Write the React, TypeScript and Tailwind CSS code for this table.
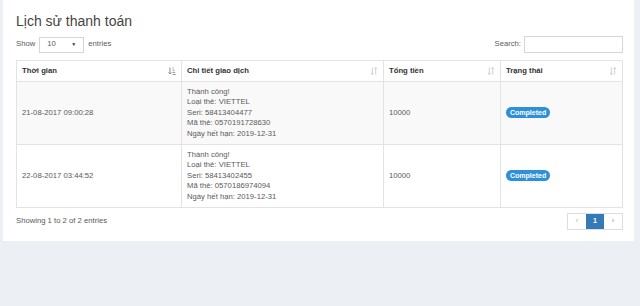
import { FC } from "react"

interface Payment {
  time: string
  seri: string
  code: string
  amount: string
}

const payments: Payment[] = [
  { time: "21-08-2017 09:00:28", seri: "58413404477", code: "0570191728630", amount: "10000" },
  { time: "22-08-2017 03:44:52", seri: "58413402455", code: "0570186974094", amount: "10000" },
]

const SortIcon: FC<{ active?: boolean }> = ({ active }) =>
  active ? (
    <svg width="8" height="8" viewBox="0 0 8 8" className="shrink-0">
      <path d="M2 0.5v6.5M0.5 5.5L2 7l1.5-1.5" stroke="#8a8a8a" strokeWidth="1" fill="none" />
      <path d="M4.5 1h1.2M4.5 3.2h2M4.5 5.4h2.8M4.5 7.5h3.3" stroke="#8a8a8a" strokeWidth="0.9" />
    </svg>
  ) : (
    <svg width="8" height="8" viewBox="0 0 8 8" className="shrink-0">
      <path d="M2.3 0.5v7M1 6l1.3 1.5L3.6 6" stroke="#d0d0d0" strokeWidth="1" fill="none" />
      <path d="M5.7 7.5v-7M4.4 2l1.3-1.5L7 2" stroke="#d0d0d0" strokeWidth="1" fill="none" />
    </svg>
  )

const HeadCell: FC<{ label: string; active?: boolean; last?: boolean }> = ({ label, active, last }) => (
  <th className={`h-[21px] px-[5px] text-left font-bold text-[#333] ${last ? "" : "border-r border-[#e3e3e3]"}`}>
    <div className="flex items-center justify-between">
      <span>{label}</span>
      <SortIcon active={active} />
    </div>
  </th>
)

export default function App() {
  return (
    <div
      className="min-h-[306px] bg-[#ecf0f5] pl-[3px] pr-[6px] text-[7.7px] leading-[10.5px] text-[#5a5a5a]"
      style={{ fontFamily: '"Liberation Sans", Arial, sans-serif' }}
    >
      <div className="h-[241px] bg-white pl-[13px] pr-[11px] pt-[13px]">
        <h3 className="text-[14px] leading-[16px] font-light text-[#444]">Lịch sử thanh toán</h3>

        <div className="mt-[7px] flex items-center justify-between">
          <div className="flex items-center gap-[4px]">
            <span>Show</span>
            <div className="flex h-[16px] w-[45px] items-center justify-between border border-[#d2d6de] px-[7px]">
              <span>10</span>
              <span className="text-[5px] text-[#333]">▼</span>
            </div>
            <span>entries</span>
          </div>
          <div className="flex items-center gap-[3px]">
            <span>Search:</span>
            <div className="h-[17px] w-[99px] border border-[#d2d6de]" />
          </div>
        </div>

        <table className="mt-[7px] w-[607px] table-fixed border-collapse border border-[#e3e3e3]">
          <colgroup>
            <col className="w-[165px]" />
            <col className="w-[202px]" />
            <col className="w-[117px]" />
            <col />
          </colgroup>
          <thead>
            <tr className="border-b border-[#e3e3e3]">
              <HeadCell label="Thời gian" active />
              <HeadCell label="Chi tiết giao dịch" />
              <HeadCell label="Tổng tiền" />
              <HeadCell label="Trạng thái" last />
            </tr>
          </thead>
          <tbody>
            {payments.map((p, i) => (
              <tr key={p.time} className={`h-[63px] border-b border-[#e3e3e3] ${i % 2 === 0 ? "bg-[#f9f9f9]" : "bg-white"}`}>
                <td className="border-r border-[#e3e3e3] px-[5px] align-middle">{p.time}</td>
                <td className="border-r border-[#e3e3e3] px-[5px] py-[4px] align-middle">
                  <div>Thành công!</div>
                  <div>Loại thẻ: VIETTEL</div>
                  <div>Seri: {p.seri}</div>
                  <div>Mã thẻ: {p.code}</div>
                  <div>Ngày hết hạn: 2019-12-31</div>
                </td>
                <td className="border-r border-[#e3e3e3] px-[5px] align-middle">{p.amount}</td>
                <td className="px-[5px] align-middle">
                  <span className="inline-block rounded-full bg-[#2f8fd8] px-[4px] text-[7px] leading-[11px] font-bold text-white">
                    Completed
                  </span>
                </td>
              </tr>
            ))}
          </tbody>
        </table>

        <div className="mt-[5px] flex items-center justify-between">
          <span>Showing 1 to 2 of 2 entries</span>
          <div className="flex h-[17px] border border-[#ddd] text-[7px]">
            <span className="flex w-[18px] items-center justify-center text-[#aaa]">‹</span>
            <span className="flex w-[18px] items-center justify-center bg-[#337ab7] font-bold text-white">1</span>
            <span className="flex w-[18px] items-center justify-center text-[#888]">›</span>
          </div>
        </div>
      </div>
    </div>
  )
}
